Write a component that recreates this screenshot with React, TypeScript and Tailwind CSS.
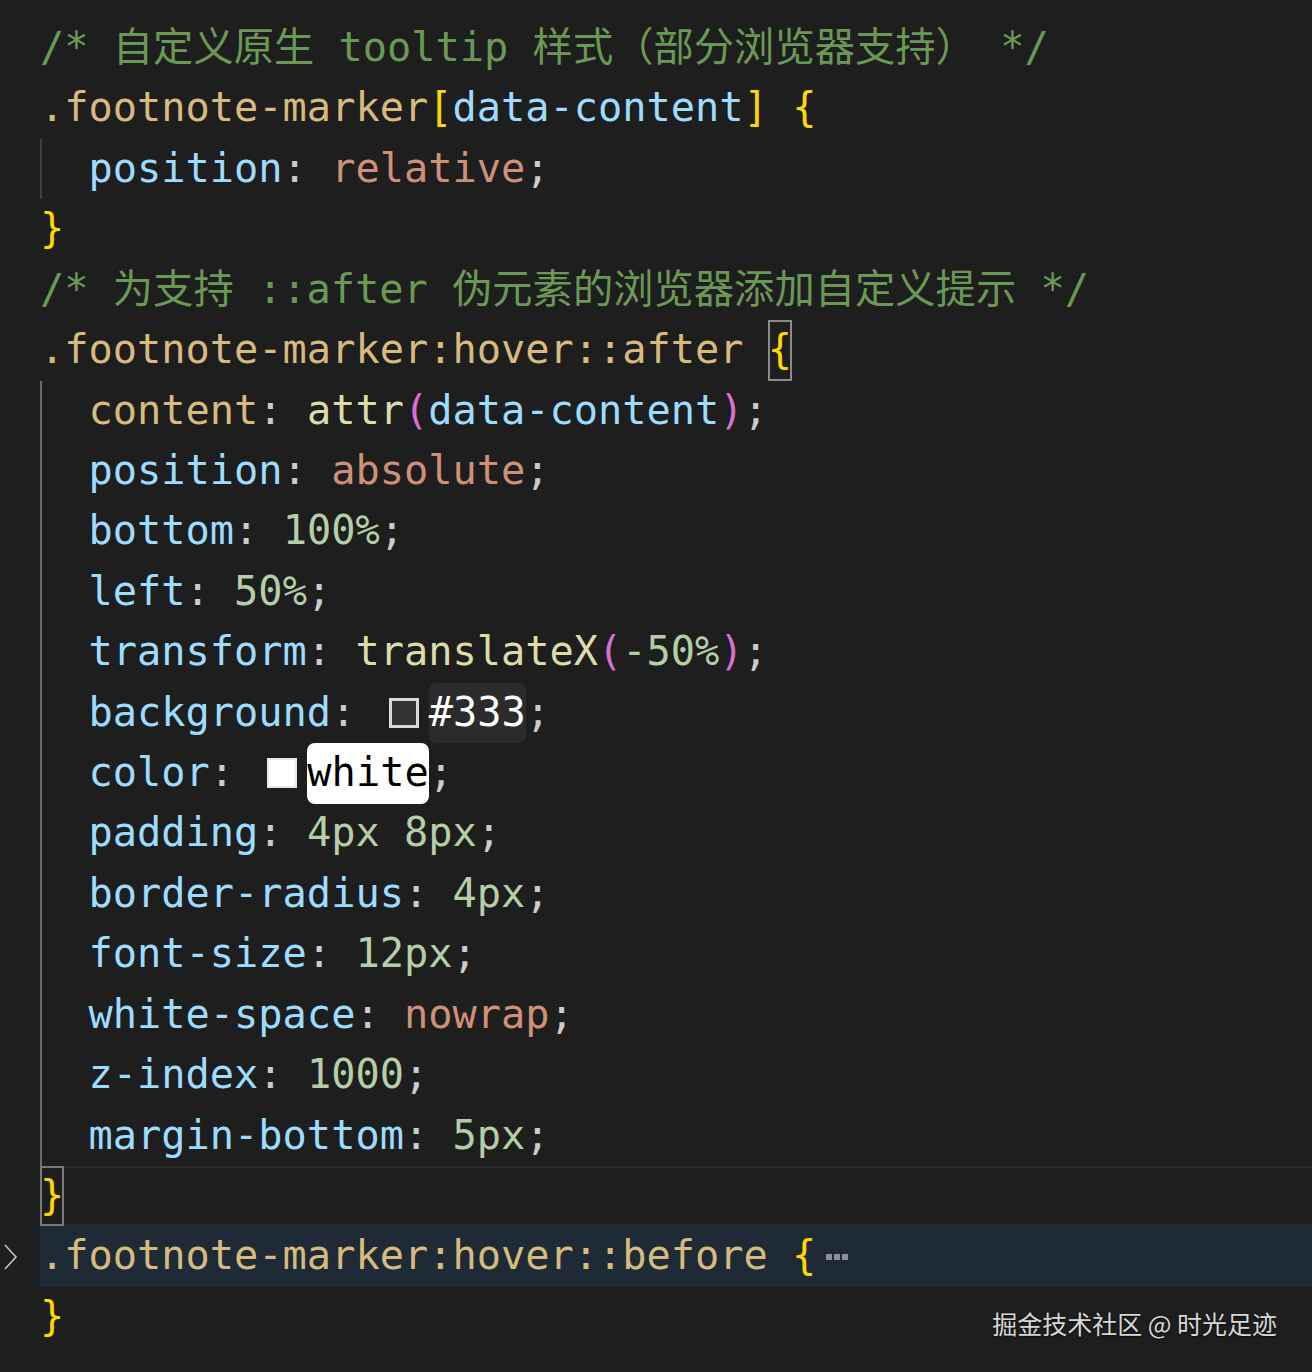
import React from "react";

type Tok = [string, string];

const C = {
  cm: "text-[#6a9955]",
  sel: "text-[#d7ba7d]",
  br: "text-[#ffd700]",
  prop: "text-[#9cdcfe]",
  p: "text-[#cccccc]",
  str: "text-[#ce9178]",
  num: "text-[#b5cea8]",
  fn: "text-[#dcdcaa]",
  par: "text-[#da70d6]",
};

const Code = ({ toks }: { toks: Tok[] }) => (
  <>
    {toks.map(([t, c], i) => (
      <span key={i} className={c}>
        {t}
      </span>
    ))}
  </>
);

const Line = ({
  children,
  guide,
  className = "",
  gutter,
}: {
  children: React.ReactNode;
  guide?: "dim" | "active";
  className?: string;
  gutter?: React.ReactNode;
}) => (
  <div className="flex h-[60.43px]">
    <div className="w-[40px] shrink-0 flex items-center justify-start">{gutter}</div>
    <div
      className={`flex-1 flex items-center whitespace-pre ${
        guide === "active"
          ? "shadow-[inset_2px_0_0_#6b6b6b]"
          : guide === "dim"
          ? "shadow-[inset_2px_0_0_#404040]"
          : ""
      } ${className}`}
    >
      {children}
    </div>
  </div>
);

const Prop = ({ name, value }: { name: string; value: Tok[] }) => (
  <Line guide="active">
    <Code toks={[["  " + name, C.prop], [": ", C.p], ...value, [";", C.p]]} />
  </Line>
);

export default function App() {
  return (
    <div className="relative w-[1312px] h-[1372px] overflow-hidden bg-[#1e1e1e] pt-[18px] font-['DejaVu_Sans_Mono','Noto_Sans_CJK_SC',monospace] text-[40.3px] leading-[60.43px] text-[#d4d4d4]">
      <Line>
        <Code toks={[["/* 自定义原生 tooltip 样式（部分浏览器支持） */", C.cm]]} />
      </Line>
      <Line>
        <Code
          toks={[
            [".footnote-marker", C.sel],
            ["[", C.br],
            ["data-content", C.prop],
            ["]", C.br],
            [" ", C.p],
            ["{", C.br],
          ]}
        />
      </Line>
      <Line guide="dim">
        <Code toks={[["  position", C.prop], [": ", C.p], ["relative", C.str], [";", C.p]]} />
      </Line>
      <Line>
        <Code toks={[["}", C.br]]} />
      </Line>
      <Line>
        <Code toks={[["/* 为支持 ::after 伪元素的浏览器添加自定义提示 */", C.cm]]} />
      </Line>
      <Line>
        <Code toks={[[".footnote-marker:hover::after ", C.sel]]} />
        <span className={`${C.br} h-full flex items-center shadow-[inset_0_0_0_2px_#8a8a8a]`}>{"{"}</span>
      </Line>
      <Line guide="active">
        <Code
          toks={[
            ["  content", C.sel],
            [": ", C.p],
            ["attr", C.fn],
            ["(", C.par],
            ["data-content", C.prop],
            [")", C.par],
            [";", C.p],
          ]}
        />
      </Line>
      <Prop name="position" value={[["absolute", C.str]]} />
      <Prop name="bottom" value={[["100%", C.num]]} />
      <Prop name="left" value={[["50%", C.num]]} />
      <Prop
        name="transform"
        value={[
          ["translateX", C.fn],
          ["(", C.par],
          ["-50%", C.num],
          [")", C.par],
        ]}
      />
      <Line guide="active">
        <Code toks={[["  background", C.prop], [": ", C.p]]} />
        <span className="ml-[9px] mr-[10px] w-[30px] h-[30px] border-[3px] border-[#d9d9d9] bg-[#333333]" />
        <span className="rounded-[7px] bg-[#2b2b2b] text-white">#333</span>
        <span className={C.p}>;</span>
      </Line>
      <Line guide="active">
        <Code toks={[["  color", C.prop], [": ", C.p]]} />
        <span className="ml-[9px] mr-[10px] w-[30px] h-[30px] border-[2px] border-[#e6e6e6] bg-white" />
        <span className="rounded-[8px] bg-white text-black">white</span>
        <span className={C.p}>;</span>
      </Line>
      <Prop name="padding" value={[["4px 8px", C.num]]} />
      <Prop name="border-radius" value={[["4px", C.num]]} />
      <Prop name="font-size" value={[["12px", C.num]]} />
      <Prop name="white-space" value={[["nowrap", C.str]]} />
      <Prop name="z-index" value={[["1000", C.num]]} />
      <Prop name="margin-bottom" value={[["5px", C.num]]} />
      <Line className="shadow-[inset_0_2px_0_#2a2a2a,inset_0_-2px_0_#2a2a2a]">
        <span className={`${C.br} h-full flex items-center shadow-[inset_0_0_0_2px_#7a7a7a]`}>{"}"}</span>
      </Line>
      <Line
        className="bg-[#1f2a37]"
        gutter={
          <svg width="16" height="28" viewBox="0 0 16 28" className="ml-[3px]">
            <polyline points="2,2 13,14 2,26" fill="none" stroke="#c5c5c5" strokeWidth="1.6" />
          </svg>
        }
      >
        <Code toks={[[".footnote-marker:hover::before ", C.sel], ["{", C.br]]} />
        <span className="ml-[10px] flex gap-[2px]">
          <span className="w-[6px] h-[6px] bg-[#8b8f96]" />
          <span className="w-[6px] h-[6px] bg-[#8b8f96]" />
          <span className="w-[6px] h-[6px] bg-[#8b8f96]" />
        </span>
      </Line>
      <Line>
        <Code toks={[["}", C.br]]} />
      </Line>

      <div className="absolute right-[35px] top-[1306px] font-['Noto_Sans_CJK_SC',sans-serif] text-[25px] leading-[34px] text-[#d8d8d8] [text-shadow:0_1px_2px_rgba(0,0,0,0.7)]">
        掘金技术社区 @ 时光足迹
      </div>
    </div>
  );
}
